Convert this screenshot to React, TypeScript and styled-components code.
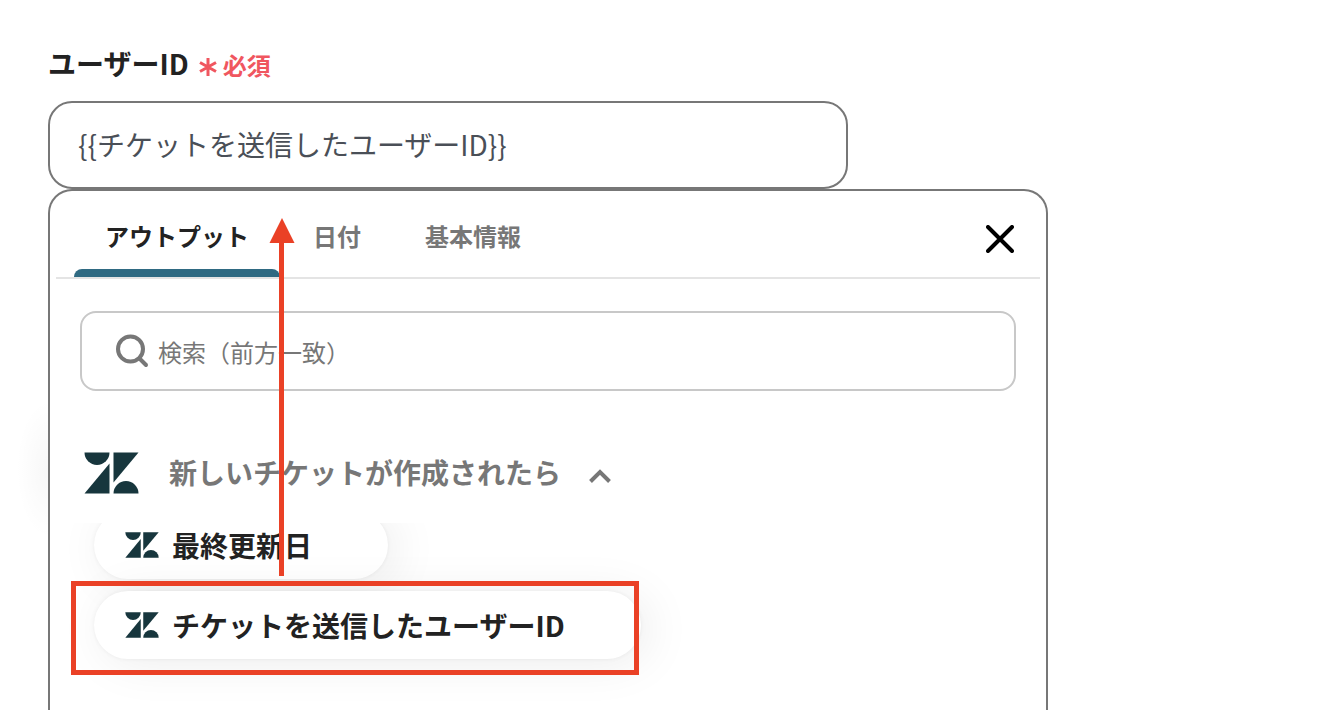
import React from "react";
import styled, { createGlobalStyle } from "styled-components";

const GlobalStyle = createGlobalStyle`
  *, *::before, *::after { box-sizing: border-box; }
  body {
    margin: 0;
    background: #fff;
    color: #222;
    font-family: "Noto Sans CJK JP", sans-serif;
  }
  button, input { font-family: inherit; }
`;

const Page = styled.main`
  position: relative;
  display: flex;
  flex-direction: column;
  height: 100vh;
  overflow: hidden;
  padding: 43px 48px 0;
`;

const Field = styled.div`
  display: flex;
  flex-direction: column;
  flex: 1;
  width: 100%;
  max-width: 1000px;
  isolation: isolate;
`;

const LabelRow = styled.div`
  display: flex;
  align-items: center;
  gap: 10px;
  height: 40px;
  margin-bottom: 18px;
`;

const Label = styled.label`
  font-size: 28px;
  font-weight: 700;
  line-height: 40px;
`;

const Required = styled.span`
  display: flex;
  align-items: center;
  gap: 6px;
  padding-top: 4px;
  color: #f0565f;
  font-size: 24px;
  font-weight: 700;
  line-height: 36px;

  svg { margin-top: 4px; }
`;

const ValueInput = styled.input`
  width: 80%;
  height: 88px;
  padding: 0 28px 2px;
  border: 2px solid #777;
  border-radius: 24px;
  background: #fff;
  color: #4a4f57;
  font-size: 28px;
  outline: none;
`;

const Panel = styled.section`
  position: relative;
  display: flex;
  flex-direction: column;
  flex: 1;
  border: 2px solid #777;
  border-bottom: 0;
  border-radius: 24px 24px 0 0;

  &::before {
    content: "";
    position: absolute;
    z-index: -1;
    top: 208px;
    left: -34px;
    width: 32px;
    height: 140px;
    background: radial-gradient(ellipse at right, rgba(0, 0, 0, 0.03), transparent 70%);
  }
`;

const TabBar = styled.div`
  display: flex;
  align-items: stretch;
  justify-content: space-between;
  height: 88px;
  margin: 0 6px;
  padding: 0 22px 0 18px;
  border-bottom: 2px solid #e4e4e4;
`;

const TabList = styled.div`
  display: flex;
  gap: 2px;
`;

const Tab = styled.button<{ $active?: boolean }>`
  position: relative;
  padding: 2px 31px 0;
  border: 0;
  background: none;
  color: ${(p) => (p.$active ? "#222" : "#777")};
  font-size: 24px;
  font-weight: 700;

  &::after {
    content: "";
    position: absolute;
    inset: auto 0 0;
    height: 8px;
    border-radius: 8px 8px 0 0;
    background: ${(p) => (p.$active ? "#2f6a82" : "transparent")};
  }
`;

const CloseButton = styled.button`
  display: flex;
  align-items: center;
  padding: 10px 4px 0;
  border: 0;
  background: none;
  color: #000;
`;

const SearchBox = styled.label`
  display: flex;
  align-items: center;
  gap: 8px;
  height: 80px;
  margin: 32px 30px 0;
  padding: 0 32px;
  border: 2px solid #c8c8c8;
  border-radius: 16px;
  color: #777;
`;

const SearchInput = styled.input`
  flex: 1;
  min-width: 0;
  padding: 0;
  border: 0;
  outline: none;
  background: none;
  font-size: 24px;

  &::placeholder { color: #777; opacity: 1; }
`;

const GroupButton = styled.button`
  display: flex;
  align-items: center;
  align-self: flex-start;
  height: 60px;
  margin: 52px 34px 0;
  padding: 0;
  border: 0;
  background: none;
  color: #777;
  font-size: 28px;
  font-weight: 700;
`;

const GroupTitle = styled.span`
  margin: 0 27px 0 30px;
  padding-bottom: 2px;
`;

const Chevron = styled.svg`
  margin-top: 6px;
`;

const OutputList = styled.ul`
  display: flex;
  flex-direction: column;
  align-items: flex-start;
  flex: 1;
  gap: 12px;
  min-height: 0;
  margin: 20px 0 0;
  padding: 0 44px;
  overflow: hidden;
  list-style: none;
`;

const OutputItem = styled.li`
  &:first-child { margin-top: -12px; }
`;

const OutputChip = styled.button`
  display: flex;
  align-items: center;
  gap: 13px;
  height: 68px;
  padding: 0 76px 0 31px;
  border: 0;
  border-radius: 34px;
  background: #fff;
  box-shadow: 0 0 4px rgba(0, 0, 0, 0.06), 8px 4px 48px rgba(0, 0, 0, 0.08);
  color: #222;
  font-size: 28px;
  font-weight: 700;
`;

const Highlight = styled.div`
  position: absolute;
  top: 581px;
  left: 71px;
  width: 568px;
  height: 94px;
  border: 5px solid #ea4126;
  pointer-events: none;
`;

const Arrow = styled.svg`
  position: absolute;
  top: 218px;
  left: 269px;
  pointer-events: none;
`;

function ZendeskMark({ width }: { width: number }) {
  return (
    <svg width={width} height={(width * 42) / 55} viewBox="0 0 55 42" fill="#17363d" aria-hidden="true">
      <path d="M0.500 0.500H25.500A12.500 12.500 0 0 1 0.500 0.500Z" />
      <path d="M25.500 11.500V41.500H0.500Z" />
      <path d="M29.500 0.500H54.500L29.500 30.500Z" />
      <path d="M29.500 41.500A12.500 12.500 0 0 1 54.500 41.500Z" />
    </svg>
  );
}

const outputs = ["最終更新日", "チケットを送信したユーザーID"];

export default function App() {
  return (
    <>
      <GlobalStyle />
      <Page>
        <Field>
          <LabelRow>
            <Label htmlFor="user-id">ユーザーID</Label>
            <Required>
              <svg width="18" height="20" viewBox="0 0 18 20" stroke="currentColor" strokeWidth="3" aria-hidden="true">
                <path d="M9 1V19M1 5.500L17 14.500M17 5.500L1 14.500" />
              </svg>
              必須
            </Required>
          </LabelRow>
          <ValueInput id="user-id" defaultValue="{{チケットを送信したユーザーID}}" />
          <Panel>
            <TabBar>
              <TabList role="tablist">
                <Tab role="tab" aria-selected="true" $active>アウトプット</Tab>
                <Tab role="tab" aria-selected="false">日付</Tab>
                <Tab role="tab" aria-selected="false">基本情報</Tab>
              </TabList>
              <CloseButton aria-label="閉じる">
                <svg width="28" height="28" viewBox="0 0 28 28" stroke="currentColor" strokeWidth="4" strokeLinecap="round">
                  <path d="M2 2L26 26M26 2L2 26" />
                </svg>
              </CloseButton>
            </TabBar>
            <SearchBox>
              <svg width="36" height="36" viewBox="0 0 36 36" fill="none" stroke="currentColor" strokeWidth="4" strokeLinecap="round" aria-hidden="true">
                <circle cx="16.500" cy="16" r="12.500" />
                <path d="M26 26L32 32" />
              </svg>
              <SearchInput aria-label="検索" placeholder="検索（前方一致）" />
            </SearchBox>
            <GroupButton aria-expanded="true">
              <ZendeskMark width={55} />
              <GroupTitle>新しいチケットが作成されたら</GroupTitle>
              <Chevron width="24" height="16" viewBox="0 0 24 16" fill="none" stroke="currentColor" strokeWidth="4" aria-hidden="true">
                <path d="M2.500 13.500L12 4L21.500 13.500" />
              </Chevron>
            </GroupButton>
            <OutputList>
              {outputs.map((name) => (
                <OutputItem key={name}>
                  <OutputChip>
                    <ZendeskMark width={34} />
                    {name}
                  </OutputChip>
                </OutputItem>
              ))}
            </OutputList>
          </Panel>
        </Field>
        <Highlight />
        <Arrow width="26" height="358" viewBox="0 0 26 358" fill="#ea4126" aria-hidden="true">
          <path d="M13 0L25.500 25H15V358H10V25H0.500Z" />
        </Arrow>
      </Page>
    </>
  );
}
